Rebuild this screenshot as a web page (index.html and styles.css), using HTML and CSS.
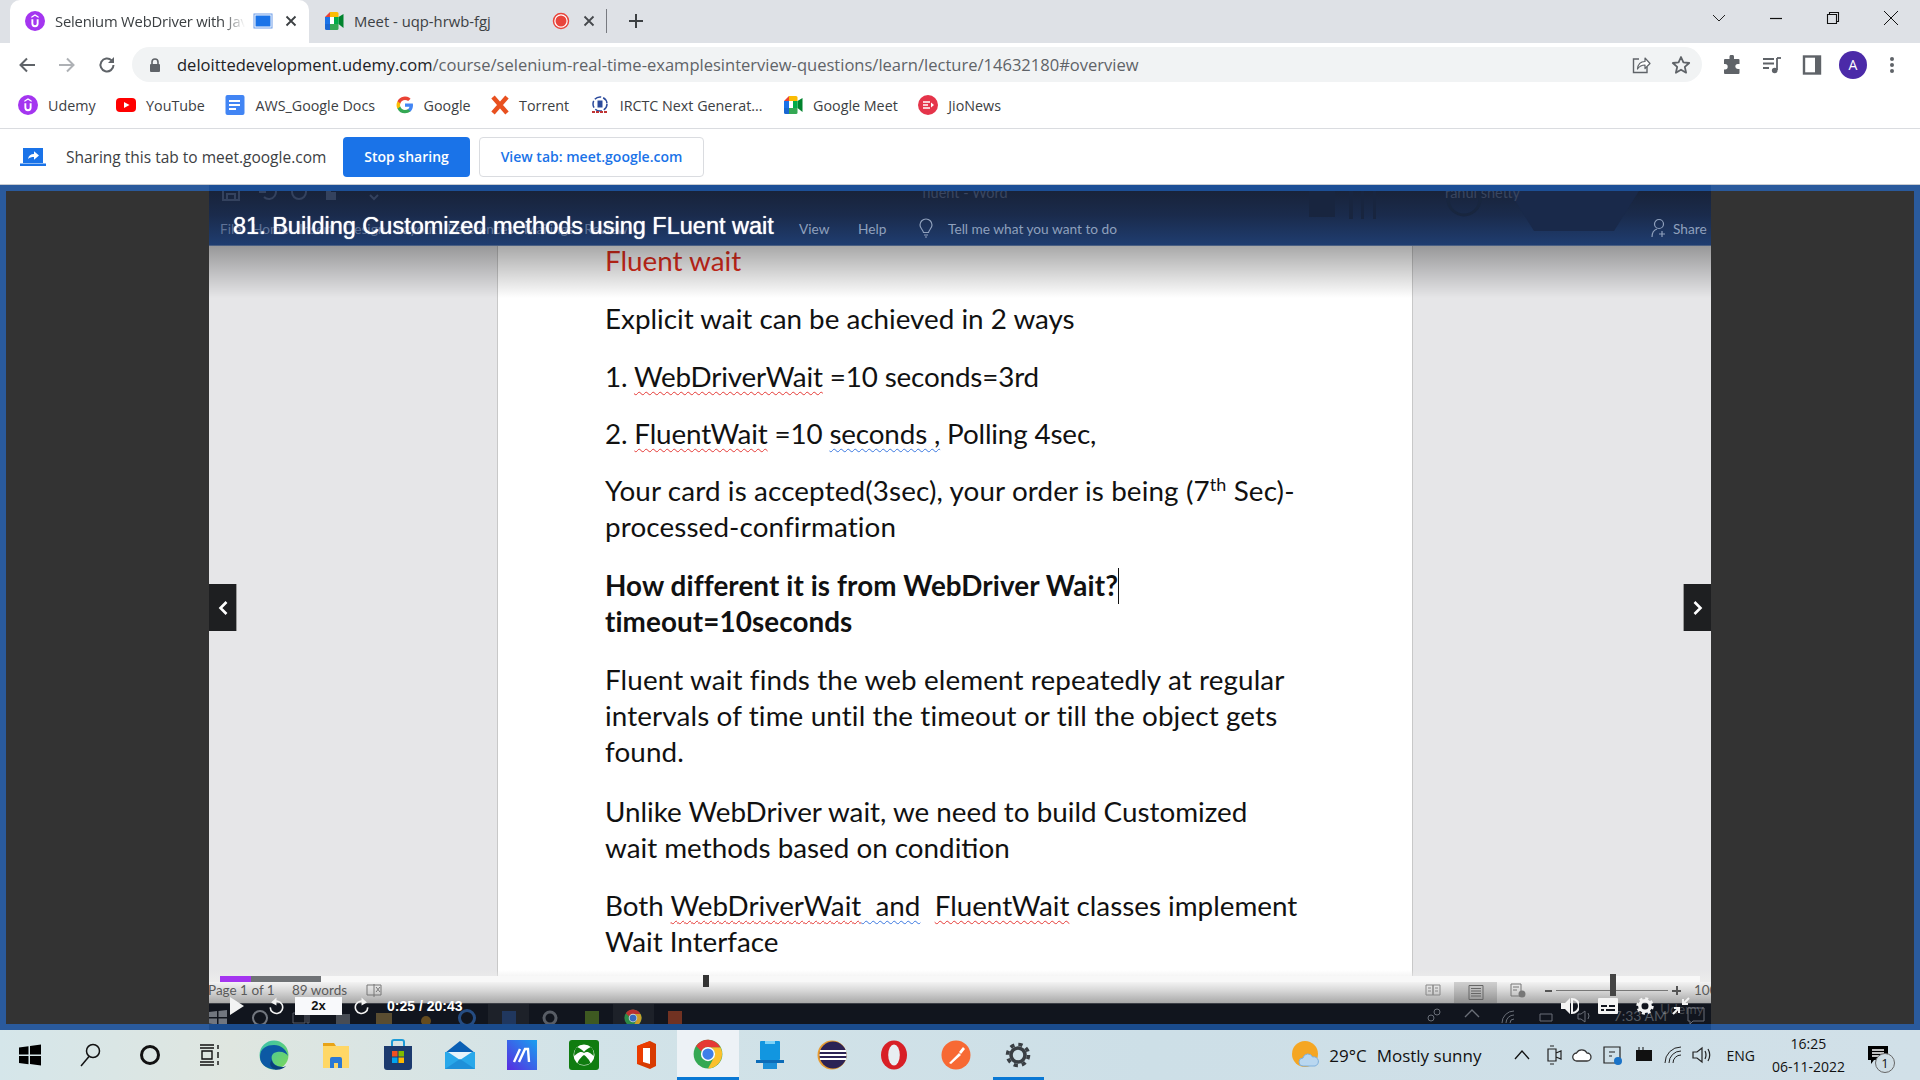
FILE: index.html
```html
<!DOCTYPE html>
<html>
<head>
    <meta charset="UTF-8">
    <title>Selenium WebDriver with Java</title>
    <link rel="stylesheet" href="styles.css">
</head>
<body>
    <!-- shared icons -->
    <svg class="defs" width="0" height="0">
        <symbol id="udemy" viewBox="0 0 20 20">
            <circle cx="10" cy="10" r="10" fill="#a435f0"/>
            <path d="M6.4 8.2v4.4a3.6 3.6 0 0 0 7.2 0V8.200h-1.900v4.300a1.700 1.700 0 0 1-3.400 0V8.200z" fill="#fff"/>
            <path d="M10 3.200l3.600 2.300v1.400L10 4.700 6.400 6.900V5.500z" fill="#fff"/>
        </symbol>
        <symbol id="meet" viewBox="0 0 20 20">
            <path d="M1 6l5-5v5z" fill="#ea4335"/>
            <path d="M6 1h7a1.500 1.500 0 0 1 1.500 1.500V6H6z" fill="#fbbc04"/>
            <path d="M1 6h5v7H1z" fill="#1a73e8"/>
            <path d="M1 13h5v6H2.500A1.500 1.500 0 0 1 1 17.500z" fill="#1967d2"/>
            <path d="M6 13h8.500v4.500A1.500 1.500 0 0 1 13 19H6z" fill="#34a853"/>
            <path d="M14.500 6v7L19.500 17V3z" fill="#00832d"/>
            <path d="M10 6h4.500v7H10z" fill="#00ac47"/>
            <path d="M6 6h4v7H6z" fill="#fff"/>
        </symbol>
        <symbol id="chrome" viewBox="0 0 24 24">
            <circle cx="12" cy="12" r="11.500" fill="#34a853"/>
            <path d="M21.900 6.500A11.500 11.500 0 0 1 12 23.500l4.800-8.800A5.500 5.500 0 0 0 12 6.500z" fill="#fbc02d"/>
            <path d="M2.500 5.500A11.500 11.500 0 0 1 21.900 6.500H12A5.500 5.500 0 0 0 6.800 10z" fill="#e53935"/>
            <circle cx="12" cy="12" r="5.700" fill="#fff"/>
            <circle cx="12" cy="12" r="4.500" fill="#3f7fe8"/>
        </symbol>
    </svg>

    <!-- tab strip -->
    <header class="tabstrip">
        <div class="tab tab-active">
            <svg class="tab-fav" width="20" height="20"><use href="#udemy"/></svg>
            <span class="tab-title tab-fade">Selenium WebDriver with Java</span>
            <svg class="tab-badge" width="20" height="20" viewBox="0 0 20 20"><rect x="1" y="3" width="18" height="14" fill="#fff" stroke="#6c9ce8"/><rect x="2.500" y="4.500" width="15" height="11" fill="#1a73e8"/></svg>
            <svg class="tab-x" width="12" height="12" viewBox="0 0 12 12"><path d="M1.500 1.500l9 9M10.500 1.500l-9 9" stroke="#3c4043" stroke-width="1.800"/></svg>
        </div>
        <div class="tab tab-bg">
            <svg class="tab-fav" width="20" height="20"><use href="#meet"/></svg>
            <span class="tab-title">Meet - uqp-hrwb-fgj</span>
            <svg class="tab-badge" width="18" height="18" viewBox="0 0 18 18"><circle cx="9" cy="9" r="7.500" fill="#fff" stroke="#e8453c" stroke-width="1.500"/><circle cx="9" cy="9" r="5.500" fill="#e8453c"/></svg>
            <svg class="tab-x" width="12" height="12" viewBox="0 0 12 12"><path d="M1.500 1.500l9 9M10.500 1.500l-9 9" stroke="#45484c" stroke-width="1.800"/></svg>
        </div>
        <span class="tab-sep"></span>
        <svg class="tab-new" width="16" height="16" viewBox="0 0 16 16"><path d="M8 1v14M1 8h14" stroke="#3c4043" stroke-width="2"/></svg>
        <div class="win-controls">
            <svg width="14" height="14" viewBox="0 0 14 14" class="win-chevron"><path d="M1 4l6 6 6-6" fill="none" stroke="#222" stroke-width="1"/></svg>
            <svg width="14" height="14" viewBox="0 0 14 14" class="win-btn"><path d="M1 7.500h12" stroke="#111" stroke-width="1.200"/></svg>
            <svg width="14" height="14" viewBox="0 0 14 14" class="win-btn"><path d="M1.500 3.500h9v9h-9zM3.500 3.500v-2h9v9h-2" fill="none" stroke="#111" stroke-width="1.100"/></svg>
            <svg width="16" height="16" viewBox="0 0 16 16" class="win-btn"><path d="M1 1l14 14M15 1L1 15" stroke="#111" stroke-width="1"/></svg>
        </div>
    </header>

    <!-- address bar -->
    <nav class="toolbar">
        <svg class="tb-icon" width="18" height="18" viewBox="0 0 18 18"><path d="M17 9H3M9 2.500L2.500 9 9 15.500" fill="none" stroke="#5f6368" stroke-width="2"/></svg>
        <svg class="tb-icon" width="18" height="18" viewBox="0 0 18 18"><path d="M1 9h14M9 2.500L15.500 9 9 15.500" fill="none" stroke="#aeb1b5" stroke-width="2"/></svg>
        <svg class="tb-icon" width="18" height="18" viewBox="0 0 18 18"><path d="M15.500 9A6.500 6.500 0 1 1 13.600 4.400" fill="none" stroke="#5f6368" stroke-width="2"/><path d="M16 1v6h-6z" fill="#5f6368"/></svg>
        <div class="omnibox">
            <svg class="lock" width="12" height="14" viewBox="0 0 12 14"><path d="M3 6V4a3 3 0 0 1 6 0v2" fill="none" stroke="#5f6368" stroke-width="1.600"/><rect x="1" y="6" width="10" height="8" rx="1" fill="#5f6368"/></svg>
            <span class="url"><span class="url-host">deloittedevelopment.udemy.com</span>/course/selenium-real-time-examplesinterview-questions/learn/lecture/14632180#overview</span>
            <svg class="omni-share" width="20" height="20" viewBox="0 0 20 20"><path d="M8 4H2.500v13.500H16V12" fill="none" stroke="#5f6368" stroke-width="1.400"/><path d="M6.500 14c.5-5 3.500-7.500 7.500-7.500V3l5 5.500-5 5V10c-3 0-5.500 1-7.500 4z" fill="#fff" stroke="#5f6368" stroke-width="1.200" stroke-linejoin="round"/></svg>
            <svg class="omni-star" width="20" height="20" viewBox="0 0 20 20"><path d="M10 2l2.400 5.400 5.800.6-4.400 3.900 1.300 5.800L10 14.700l-5.100 3 1.300-5.800L1.800 8l5.800-.6z" fill="none" stroke="#5f6368" stroke-width="1.800" stroke-linejoin="round"/></svg>
        </div>
        <div class="tb-right">
            <svg width="20" height="20" viewBox="0 0 20 20"><path d="M7.500 1.500a2.300 2.300 0 0 1 4.500 0V4h4.500a1 1 0 0 1 1 1v4h-1.700a2.500 2.500 0 0 0 0 5h1.700v4a1 1 0 0 1-1 1H3a1 1 0 0 1-1-1v-3.500h1a2.700 2.700 0 0 0 0-5.400H2V5a1 1 0 0 1 1-1h4.500z" fill="#5f6368"/></svg>
            <svg width="20" height="20" viewBox="0 0 20 20"><path d="M1 4h11M1 8.500h11M1 13h6" stroke="#5f6368" stroke-width="1.800"/><path d="M15 3v12" stroke="#5f6368" stroke-width="1.800"/><path d="M15 3h4" stroke="#5f6368" stroke-width="1.800"/><circle cx="12.700" cy="15.500" r="2.800" fill="#5f6368"/></svg>
            <svg width="20" height="20" viewBox="0 0 20 20"><rect x="2" y="1.500" width="16" height="17" fill="#fff" stroke="#5f6368" stroke-width="2.400"/><rect x="13" y="1.500" width="5" height="17" fill="#5f6368"/></svg>
            <span class="avatar">A</span>
            <svg class="dots" width="6" height="18" viewBox="0 0 6 18"><circle cx="3" cy="3" r="2" fill="#5f6368"/><circle cx="3" cy="9" r="2" fill="#5f6368"/><circle cx="3" cy="15" r="2" fill="#5f6368"/></svg>
        </div>
    </nav>

    <!-- bookmarks -->
    <div class="bookmarks">
        <a class="bm"><svg width="20" height="20"><use href="#udemy"/></svg>Udemy</a>
        <a class="bm"><svg width="20" height="20" viewBox="0 0 20 20"><rect y="3" width="20" height="14" rx="4" fill="#f00"/><path d="M8 7l5.500 3L8 13z" fill="#fff"/></svg>YouTube</a>
        <a class="bm"><svg width="20" height="20" viewBox="0 0 20 20"><rect width="19" height="20" rx="2" x="0.500" fill="#4285f4"/><path d="M4 6h11M4 10h11M4 14h7" stroke="#fff" stroke-width="2"/></svg>AWS_Google Docs</a>
        <a class="bm"><svg width="18" height="18" viewBox="0 0 18 18"><path d="M17 9.200c0-.6-.1-1.200-.2-1.700H9v3.300h4.500a3.900 3.900 0 0 1-1.700 2.500v2.100h2.700c1.600-1.500 2.500-3.600 2.500-6.200z" fill="#4285f4"/><path d="M9 17.300c2.200 0 4.100-.7 5.500-2l-2.700-2.100c-.7.500-1.700.8-2.800.8-2.200 0-4-1.400-4.700-3.400H1.500v2.200A8.300 8.300 0 0 0 9 17.300z" fill="#34a853"/><path d="M4.300 10.600a5 5 0 0 1 0-3.200V5.200H1.500a8.300 8.300 0 0 0 0 7.600z" fill="#fbbc05"/><path d="M9 3.900c1.200 0 2.300.4 3.200 1.200l2.400-2.400A8.300 8.300 0 0 0 1.500 5.200l2.800 2.200C5 5.300 6.800 3.900 9 3.900z" fill="#ea4335"/></svg>Google</a>
        <a class="bm"><svg width="18" height="20" viewBox="0 0 18 20"><path d="M2 2l14 16M16 2L2 18" stroke="#e8501f" stroke-width="4.500"/></svg>Torrent</a>
        <a class="bm"><svg width="20" height="20" viewBox="0 0 20 20"><circle cx="10" cy="9" r="7" fill="none" stroke="#2b4a9c" stroke-width="1.500" stroke-dasharray="7 2"/><path d="M7.500 5.500h5v7h-5z" fill="#2b4a9c"/><path d="M2 17h16" stroke="#c03434" stroke-width="2" stroke-dasharray="3 1"/></svg>IRCTC Next Generat...</a>
        <a class="bm"><svg width="20" height="20"><use href="#meet"/></svg>Google Meet</a>
        <a class="bm"><svg width="20" height="20" viewBox="0 0 20 20"><circle cx="10" cy="10" r="10" fill="#e5344a"/><path d="M5 7h7M5 10h5M5 13h7" stroke="#fff" stroke-width="1.600"/><path d="M13 7.500l3 2.500-3 2.500z" fill="#fff"/></svg>JioNews</a>
    </div>

    <!-- tab sharing infobar -->
    <div class="infobar">
        <svg class="share-icon" width="26" height="20" viewBox="0 0 26 20"><path d="M3 1h20v15H3z" fill="#1a73e8"/><path d="M0 16.500h26V19H0z" fill="#1a73e8"/><path d="M8 12c.6-3.400 2.800-5 6-5V4.200l5 4.300-5 4.200V10c-2.500 0-4.400.5-6 2z" fill="#fff"/></svg>
        <span class="share-text">Sharing this tab to meet.google.com</span>
        <button class="btn btn-stop">Stop sharing</button>
        <button class="btn btn-view">View tab: meet.google.com</button>
    </div>

    <!-- shared screen with the course player -->
    <main class="screen">
        <div class="screen-inner">
            <section class="video">
                <div class="gutter gutter-left"></div>
                <article class="page">
                    <p class="red">Fluent wait</p>
                    <p>Explicit wait can be achieved in 2 ways</p>
                    <p class="tight">1. <span class="sp-red">WebDriverWait</span> =10 seconds=3rd</p>
                    <p class="tight">2. <span class="sp-red">FluentWait</span> =10 <span class="sp-blue">seconds ,</span> Polling 4sec,</p>
                    <p class="wide">Your card is accepted(3sec), your order is being (7<sup>th</sup> Sec)-<br>processed-confirmation</p>
                    <p class="bold">How different it is from WebDriver Wait?<span class="caret"></span><br>timeout=10seconds</p>
                    <p class="wide">Fluent wait finds the web element repeatedly at regular<br>intervals of time until the timeout or till the object gets<br>found.</p>
                    <p>Unlike WebDriver wait, we need to build Customized<br>wait methods based on condition</p>
                    <p>Both <span class="sp-red">WebDriverWait</span><span class="sp-blue">&nbsp; and</span>&nbsp; <span class="sp-red">FluentWait</span> classes implement<br>Wait Interface</p>
                </article>
                <div class="gutter"></div>

                <!-- course title over the recorded Word ribbon -->
                <div class="ribbon">
                    <svg class="ghost-art" width="420" height="42" viewBox="0 0 420 42"><path d="M10 0h26v26H10zM50 0h4v28h-4zM62 0h3v28h-3zM74 0h3v28h-3z" fill="#18253f"/><circle cx="165" cy="8" r="16" fill="none" stroke="#18263f" stroke-width="3"/><path d="M210 0h130l-25 40h-80z" fill="#19294a"/></svg>
                    <svg class="ghost-qat" width="170" height="18" viewBox="0 0 170 18"><path d="M1 1h16v16H1zM5 1v6h8V1M5 17v-6h8v6" fill="none" stroke="#34425e" stroke-width="2"/><path d="M40 8a7 7 0 1 1 2 6M38 3v6h6" fill="none" stroke="#34425e" stroke-width="2"/><circle cx="77" cy="9" r="7" fill="none" stroke="#34425e" stroke-width="2"/><path d="M104 1h5v8h5v8h-10z" fill="#34425e"/><path d="M148 12l4 4 4-4" fill="none" stroke="#34425e" stroke-width="2"/></svg>
                    <div class="ribbon-title">
                        <span class="ghost-doc">fluent - Word</span>
                        <span class="ghost-user">rahul shetty</span>
                    </div>
                    <div class="ribbon-tabs">
                        <span class="ghost-tabs">File &nbsp; Home &nbsp; Insert &nbsp; Design &nbsp; Layout &nbsp; References &nbsp; Mailings &nbsp; Review</span>
                        <span class="rb-view">View</span>
                        <span class="rb-help">Help</span>
                        <svg class="rb-bulb" width="14" height="20" viewBox="0 0 14 20"><path d="M4.500 14.500C4 11.500 1 10.500 1 7a6 6 0 0 1 12 0c0 3.500-3 4.500-3.500 7.500zM5 17h4M6 19h2" fill="none" stroke="#8fa0bc" stroke-width="1.200"/></svg>
                        <span class="rb-tell">Tell me what you want to do</span>
                        <svg class="rb-person" width="16" height="20" viewBox="0 0 16 20"><circle cx="8" cy="6" r="4.500" fill="none" stroke="#8fa0bc" stroke-width="1.200"/><path d="M1 19c0-4 2-7 5-8M11 13v6M8 16h6" fill="none" stroke="#8fa0bc" stroke-width="1.200"/></svg>
                        <span class="rb-share">Share</span>
                    </div>
                    <h1 class="lecture-title">81. Building Customized methods using FLuent wait</h1>
                </div>
                <div class="ribbon-shadow"></div>

                <button class="nav-arrow nav-prev"><svg width="12" height="16" viewBox="0 0 12 16"><path d="M9.500 2L3.500 8l6 6" fill="none" stroke="#fff" stroke-width="2.600"/></svg></button>
                <button class="nav-arrow nav-next"><svg width="12" height="16" viewBox="0 0 12 16"><path d="M2.500 2l6 6-6 6" fill="none" stroke="#fff" stroke-width="2.600"/></svg></button>

                <!-- Word status bar, recorded taskbar and the player controls on top -->
                <div class="word-bottom">
                    <div class="progress">
                        <span class="progress-done"></span><span class="progress-buf"></span>
                        <span class="ruler-mark"></span>
                        <span class="zoom-thumb"></span>
                    </div>
                    <div class="statusbar">
                        <span class="st-page">Page 1 of 1</span>
                        <span class="st-words">89 words</span>
                        <svg class="st-book" width="16" height="14" viewBox="0 0 16 14"><path d="M8 2H1v10h7M8 1v13M8 2h7v10H8M10 4l4 5M14 4l-4 5" fill="none" stroke="#777" stroke-width="1"/></svg>
                        <svg class="st-read" width="16" height="14" viewBox="0 0 16 14"><path d="M8 2H1v10h7zM8 2h7v10H8zM3 5h3M3 8h3M10 5h3M10 8h3" fill="none" stroke="#888" stroke-width="1"/></svg>
                        <span class="st-active"><svg width="16" height="15" viewBox="0 0 16 15"><path d="M1 .5h14v14H1zM3 3.500h10M3 6h10M3 8.500h10M3 11h10" fill="none" stroke="#666" stroke-width="1"/></svg></span>
                        <svg class="st-web" width="16" height="15" viewBox="0 0 16 15"><path d="M1 1h10v12H1zM3 4h6M3 7h4" fill="none" stroke="#777"/><circle cx="12" cy="11" r="3.500" fill="#777"/></svg>
                        <span class="st-minus"></span>
                        <span class="st-track"></span>
                        <span class="st-plus"></span>
                        <span class="st-pct">100%</span>
                    </div>
                    <div class="recorded-bar">
                        <div class="ghost-left">
                            <svg width="18" height="18" viewBox="0 0 18 18"><path d="M0 3l8-1v6H0zM9.500 2L18 1v7H9.500zM0 9.500h8v6l-8-1zM9.500 9.500H18V17l-8.500-1z" fill="#8a8f98"/></svg>
                            <svg width="18" height="18" viewBox="0 0 18 18"><circle cx="9" cy="9" r="7" fill="none" stroke="#8a8f98" stroke-width="2"/></svg>
                            <svg width="18" height="18" viewBox="0 0 18 18"><path d="M1 4h12v10H1zM15 4h2v10h-2z" fill="none" stroke="#6a6f78"/></svg>
                            <svg width="18" height="18" viewBox="0 0 18 18"><path d="M2 5h14v12H2z" fill="#555a62"/></svg>
                            <svg width="18" height="18" viewBox="0 0 18 18"><path d="M1 4h16v13H1z" fill="#6d5c36"/></svg>
                            <svg width="18" height="18" viewBox="0 0 18 18"><circle cx="9" cy="12" r="5" fill="#7a5a20"/></svg>
                            <svg width="18" height="18" viewBox="0 0 18 18"><circle cx="9" cy="9" r="7.500" fill="none" stroke="#2a5a9c" stroke-width="3"/></svg>
                            <span class="ghost-active"><svg width="18" height="18" viewBox="0 0 18 18"><path d="M2 2h14v14H2z" fill="#24406e"/></svg></span>
                            <svg width="18" height="18" viewBox="0 0 18 18"><circle cx="9" cy="9" r="6" fill="none" stroke="#6a6f78" stroke-width="3"/></svg>
                            <svg width="18" height="18" viewBox="0 0 18 18"><path d="M2 2h14v14H2z" fill="#4a6a22"/></svg>
                            <span class="ghost-active"><svg width="18" height="18"><use href="#chrome"/></svg></span>
                            <svg width="18" height="18" viewBox="0 0 18 18"><path d="M2 2h14v14H2z" fill="#8a3a24"/></svg>
                        </div>
                        <div class="ghost-right">
                            <svg width="18" height="18" viewBox="0 0 18 18"><circle cx="11" cy="5" r="3" fill="none" stroke="#6a6f78"/><circle cx="5" cy="11" r="3" fill="none" stroke="#6a6f78"/></svg>
                            <svg width="16" height="12" viewBox="0 0 16 12"><path d="M1 10l7-7 7 7" fill="none" stroke="#6a6f78" stroke-width="1.400"/></svg>
                            <svg width="18" height="18" viewBox="0 0 18 18"><path d="M2 16A12 12 0 0 1 14 4M6 16a8 8 0 0 1 8-8M10 16a4 4 0 0 1 4-4" fill="none" stroke="#6a6f78"/></svg>
                            <svg width="18" height="18" viewBox="0 0 18 18"><path d="M2 7h12v7H2z" fill="none" stroke="#6a6f78"/></svg>
                            <svg width="18" height="18" viewBox="0 0 18 18"><path d="M2 7h3l4-3v11l-4-3H2zM12 6q2 3 0 6" fill="none" stroke="#6a6f78"/></svg>
                            <span class="ghost-clock">7:33 AM</span>
                            <svg width="18" height="18" viewBox="0 0 18 18"><path d="M1 1h16v13H6l-3 3v-3H1z" fill="none" stroke="#6a6f78"/></svg>
                        </div>
                    </div>
                    <div class="player">
                        <svg class="pl-play" width="16" height="18" viewBox="0 0 16 18"><path d="M1 0l14 9-14 9z" fill="#f3f3f3"/></svg>
                        <svg class="pl-back" width="16" height="19" viewBox="0 0 18 20"><path d="M5 5.500A7 7 0 1 1 2.500 11" fill="none" stroke="#f3f3f3" stroke-width="1.800"/><path d="M9.500 0v9L3.500 5.500z" fill="#f3f3f3"/></svg>
                        <span class="pl-speed">2x</span>
                        <svg class="pl-fwd" width="16" height="19" viewBox="0 0 18 20"><path d="M13 5.500A7 7 0 1 0 15.500 11" fill="none" stroke="#f3f3f3" stroke-width="1.800"/><path d="M8.500 0v9l6-3.500z" fill="#f3f3f3"/></svg>
                        <span class="pl-time">0:25 / 20:43</span>
                        <span class="pl-mark">Udemy</span>
                        <svg class="pl-vol" width="18" height="18" viewBox="0 0 18 18"><path d="M0 6h4l5-5v16l-5-5H0z" fill="#f3f3f3"/><path d="M11 2a7 7 0 0 1 0 14z" fill="none" stroke="#f3f3f3" stroke-width="2"/></svg>
                        <svg class="pl-cc" width="20" height="16" viewBox="0 0 20 16"><rect width="20" height="16" rx="1" fill="#f3f3f3"/><path d="M3 8h6M11 8h6M3 12h3M8 12h9" stroke="#11151e" stroke-width="2"/></svg>
                        <svg class="pl-gear" width="18" height="18" viewBox="0 0 18 18"><circle cx="9" cy="9" r="5.200" fill="none" stroke="#f3f3f3" stroke-width="3.400"/><circle cx="9" cy="9" r="7.400" fill="none" stroke="#f3f3f3" stroke-width="2.600" stroke-dasharray="3 2.810"/></svg>
                        <svg class="pl-full" width="18" height="18" viewBox="0 0 18 18"><path d="M17 1l-6 6M11 2v5h5M1 17l6-6M2 11h5v5" fill="none" stroke="#f3f3f3" stroke-width="2"/></svg>
                    </div>
                </div>
            </section>
        </div>
    </main>

    <!-- windows taskbar -->
    <footer class="taskbar">
        <div class="tb-apps">
            <span class="cell"><svg width="22" height="22" viewBox="0 0 22 22"><path d="M0 3.500l9.500-1.300V10.500H0zM11 2l11-1.500v10H11zM0 12h9.500v8.300L0 19zM11 12h11v9.500L11 20z" fill="#000"/></svg></span>
            <span class="cell"><svg width="22" height="24" viewBox="0 0 22 24"><circle cx="14" cy="8" r="6.500" fill="none" stroke="#111" stroke-width="1.500"/><path d="M10 13.500L2 23" stroke="#111" stroke-width="1.500"/></svg></span>
            <span class="cell"><svg width="22" height="22" viewBox="0 0 22 22"><circle cx="11" cy="11" r="8.500" fill="none" stroke="#111" stroke-width="3"/></svg></span>
            <span class="cell"><svg width="22" height="22" viewBox="0 0 22 22"><path d="M1 1h14M1 21h14M1 4h14M1 18h14M3 7h10v8H3zM19 1v4M19 8v6M19 17v4" fill="none" stroke="#111" stroke-width="1.400"/></svg></span>
            <span class="cell app"><svg width="30" height="30" viewBox="0 0 30 30"><defs><linearGradient id="edgeA" x1="0" y1="0" x2="1" y2="1"><stop offset="0" stop-color="#35c1b1"/><stop offset="1" stop-color="#7ed957"/></linearGradient></defs><circle cx="15" cy="15" r="14.500" fill="url(#edgeA)"/><path d="M1 17C1 8 8 5 15 5c7 0 12 4 14 11-2-3-6-5-11-4-5 1-6 4-5 8 1 4 5 7 11 7-3 2-6 3-9 2.500C7 28.500 1 24 1 17z" fill="#0c59a4"/><path d="M13 20c0 4 4 7 10 7 2 0 3-.5 4-1-3 3-7 4-10 3.500C12 28.500 9 24 13 20z" fill="#0a3f7a"/></svg></span>
            <span class="cell app"><svg width="28" height="30" viewBox="0 0 28 30"><path d="M1 3h11l2 3H1z" fill="#e8a317"/><rect x="1" y="6" width="26" height="22" fill="#ffd766"/><path d="M8 28v-9a2 2 0 0 1 2-2h8a2 2 0 0 1 2 2v9h-4v-5h-4v5z" fill="#2b78d4"/></svg></span>
            <span class="cell app"><svg width="30" height="32" viewBox="0 0 30 32"><path d="M9 7V3a2 2 0 0 1 2-2h8a2 2 0 0 1 2 2v4" fill="none" stroke="#1e9bd7" stroke-width="2"/><path d="M1 7h28v21a3 3 0 0 1-3 3H4a3 3 0 0 1-3-3z" fill="#1c3a6e"/><rect x="9" y="12" width="5.500" height="5.500" fill="#f25022"/><rect x="15.500" y="12" width="5.500" height="5.500" fill="#7fba00"/><rect x="9" y="18.500" width="5.500" height="5.500" fill="#00a4ef"/><rect x="15.500" y="18.500" width="5.500" height="5.500" fill="#ffb900"/></svg></span>
            <span class="cell app"><svg width="30" height="30" viewBox="0 0 30 30"><path d="M15 1L0 13h30z" fill="#0a5fb4"/><rect y="12" width="30" height="17" fill="#29a8ea"/><path d="M3 12h24L15 20z" fill="#e8f4fb"/><path d="M0 29l15-10 15 10z" fill="#1e90d9"/></svg></span>
            <span class="cell app"><svg width="30" height="30" viewBox="0 0 30 30"><defs><linearGradient id="mvA" x1="0" y1="1" x2="1" y2="0"><stop offset="0" stop-color="#5a2be0"/><stop offset="1" stop-color="#18a0f0"/></linearGradient></defs><rect width="30" height="30" fill="url(#mvA)"/><path d="M7 22L13 9M12 22L18 9h3l1 13" fill="none" stroke="#fff" stroke-width="2.400"/></svg></span>
            <span class="cell app"><svg width="30" height="30" viewBox="0 0 30 30"><rect width="30" height="30" rx="3" fill="#107c10"/><circle cx="15" cy="15" r="10.500" fill="#fff"/><path d="M8 7c3 1 5.500 3 7 5 1.500-2 4-4 7-5 3 3 3 7 2.500 9-1.500-2-6-6-9.500-3-3.500-3-8 1-9.500 3C5 14 5 10 8 7zM15 15c3 2 6 6 6.500 8-3 2.500-10 2.500-13 0C9 21 12 17 15 15z" fill="#107c10"/></svg></span>
            <span class="cell app"><svg width="24" height="30" viewBox="0 0 24 30"><path d="M16 1L3 6v18l13 5 6-3V4z" fill="#d83b01"/><path d="M16 1L3 6v18l6-2V8l7-2z" fill="#eb3c00"/><path d="M9 8h7v16l-7-2z" fill="#fff"/></svg></span>
            <span class="cell app cell-active"><svg width="30" height="30"><use href="#chrome"/></svg></span>
            <span class="cell app"><svg width="30" height="30" viewBox="0 0 30 30"><rect x="5" y="1" width="20" height="19" rx="1" fill="#1296e0"/><path d="M10 1h10v3H10z" fill="#7ed3f7"/><path d="M1 20h28v3H1z" fill="#0b6cb8"/><path d="M8 23h14v6H8z" fill="#1b8fd8"/></svg></span>
            <span class="cell app"><svg width="30" height="30" viewBox="0 0 30 30"><circle cx="15" cy="15" r="14.500" fill="#e79a2f"/><circle cx="16" cy="15" r="13.500" fill="#2c2255"/><path d="M3 11h26M2.500 15h27M3 19h26" stroke="#fff" stroke-width="2"/></svg></span>
            <span class="cell app"><svg width="30" height="30" viewBox="0 0 30 30"><ellipse cx="15" cy="15" rx="13" ry="14.500" fill="#d81f26"/><ellipse cx="15" cy="15" rx="5.800" ry="10.500" fill="#e8eef2"/></svg></span>
            <span class="cell app"><svg width="30" height="30" viewBox="0 0 30 30"><circle cx="15" cy="15" r="14.500" fill="#f76934"/><path d="M8 23l10-10 2 2L10 24zM18 12l4-5 2 2-4 5z" fill="#fff"/></svg></span>
            <span class="cell app cell-open"><svg width="26" height="26" viewBox="0 0 26 26"><circle cx="13" cy="13" r="7" fill="none" stroke="#3a3f44" stroke-width="3.600"/><circle cx="13" cy="13" r="10.500" fill="none" stroke="#3a3f44" stroke-width="3.600" stroke-dasharray="4.250 4"/></svg></span>
        </div>
        <div class="tb-tray">
            <svg class="weather" width="28" height="28" viewBox="0 0 28 28"><circle cx="13" cy="13" r="13" fill="#f5a623"/><path d="M11 25a4 4 0 0 1 0-8 5 5 0 0 1 9.500-1 4.500 4.500 0 0 1 2.500 9z" fill="#b9d7f0" stroke="#7fb0dd"/></svg>
            <span class="temp">29°C</span>
            <span class="sky">Mostly sunny</span>
            <svg class="tr-caret" width="16" height="10" viewBox="0 0 16 10"><path d="M1 9l7-8 7 8" fill="none" stroke="#111" stroke-width="1.300"/></svg>
            <svg class="tr-ic" width="16" height="20" viewBox="0 0 16 20"><path d="M2 4h8v12H2zM10 8l5-2v8l-5-2M4 1h4M4 19h4" fill="none" stroke="#222" stroke-width="1.200"/></svg>
            <svg class="tr-ic" width="20" height="16" viewBox="0 0 20 16"><path d="M5 14a4 4 0 0 1-.5-8A6 6 0 0 1 15 6a4 4 0 0 1 0 8z" fill="#fff" stroke="#333" stroke-width="1.300"/></svg>
            <svg class="tr-ic" width="20" height="20" viewBox="0 0 20 20"><path d="M1 2h16v16H1zM6 7h6M6 11h3" fill="none" stroke="#222" stroke-width="1.200"/><circle cx="15" cy="16" r="4" fill="#1a73c8"/></svg>
            <svg class="tr-ic" width="20" height="16" viewBox="0 0 20 16"><rect x="3" y="3" width="16" height="11" fill="#111"/><path d="M6 0v3M10 0v3" stroke="#111"/></svg>
            <svg class="tr-ic" width="18" height="18" viewBox="0 0 18 18"><path d="M1 17A16 16 0 0 1 17 1M5 17A12 12 0 0 1 17 5M9 17a8 8 0 0 1 8-8" fill="none" stroke="#222"/></svg>
            <svg class="tr-ic" width="20" height="18" viewBox="0 0 20 18"><path d="M1 6h4l5-4v14l-5-4H1zM13 5q2 4 0 8M16 3q3.500 6 0 12" fill="none" stroke="#222" stroke-width="1.200"/></svg>
            <span class="lang">ENG</span>
            <span class="clock"><span>16:25</span><span>06-11-2022</span></span>
            <span class="notif">
                <svg width="20" height="18" viewBox="0 0 20 18"><path d="M0 0h20v14H6l-3 4v-4H0z" fill="#000"/><path d="M4 4h12M4 7h12M4 10h8" stroke="#fff" stroke-width="1.300"/></svg>
                <span class="notif-count">1</span>
            </span>
        </div>
    </footer>
</body>
</html>
```

FILE: styles.css
```css
* {
    box-sizing: border-box;
}
html, body {
    margin: 0;
    height: 100%;
}
body {
    width: 1920px;
    height: 1080px;
    overflow: hidden;
    display: flex;
    flex-direction: column;
    font-family: "Open Sans", sans-serif;
    background-color: #ffffff;
}
.defs {
    position: absolute;
}

/* tab strip */
.tabstrip {
    height: 43px;
    display: flex;
    align-items: center;
    background-color: #dee1e6;
    padding-left: 10px;
    flex: none;
}
.tab {
    height: 43px;
    display: flex;
    align-items: center;
    font-size: 14.800px;
    color: #3c4043;
    padding-bottom: 2px;
}
.tab-active {
    width: 299px;
    background-color: #ffffff;
    border-radius: 10px 10px 0 0;
    padding-left: 15px;
}
.tab-bg {
    width: 289px;
    padding-left: 15px;
}
.tab-title {
    margin-left: 10px;
    white-space: nowrap;
    overflow: hidden;
}
.tab-active .tab-title {
    width: 190px;
    letter-spacing: -.2px;
}
.tab-bg .tab-title {
    width: 198px;
}
.tab-fade {
    -webkit-mask-image: linear-gradient(90deg, #000 88%, transparent);
}
.tab-badge {
    margin-left: 8px;
}
.tab-x {
    margin-left: 12px;
    flex: none;
}
.tab-bg .tab-badge {
    margin-left: 0;
}
.tab-bg .tab-x {
    margin-left: 13px;
}
.tab-sep {
    width: 1px;
    height: 24px;
    background-color: #777a80;
    margin-left: 8px;
    margin-bottom: 2px;
}
.tab-new {
    margin-left: 21px;
    margin-bottom: 2px;
}
.win-controls {
    margin-left: auto;
    display: flex;
    align-items: center;
    height: 36px;
    align-self: flex-start;
}
.win-chevron {
    margin-right: 43px;
}
.win-btn {
    margin-right: 43px;
}
.win-btn:last-child {
    margin-right: 21px;
}

/* address bar */
.toolbar {
    height: 43px;
    display: flex;
    align-items: center;
    flex: none;
    background-color: #ffffff;
    padding-left: 18px;
}
.tb-icon {
    margin-right: 22px;
}
.omnibox {
    width: 1570px;
    height: 35px;
    margin-left: -6px;
    border-radius: 18px;
    background-color: #f1f3f4;
    display: flex;
    align-items: center;
    padding-left: 17px;
}
.lock {
    flex: none;
}
.url {
    margin-left: 16px;
    font-size: 16.550px;
    color: #5f6368;
    white-space: nowrap;
}
.url-host {
    color: #202124;
}
.omni-share {
    margin-left: auto;
}
.omni-star {
    margin-left: 20px;
    margin-right: 11px;
}
.tb-right {
    display: flex;
    align-items: center;
    margin-left: 20px;
    gap: 20px;
}
.avatar {
    width: 28px;
    height: 28px;
    border-radius: 50%;
    background-color: #4b2aa8;
    color: #ffffff;
    font-size: 14px;
    display: flex;
    align-items: center;
    justify-content: center;
    margin-left: -3px;
    margin-right: 2px;
}

/* bookmarks */
.bookmarks {
    height: 43px;
    flex: none;
    display: flex;
    align-items: center;
    gap: 20.500px;
    padding: 0 0 4px 18px;
    background-color: #ffffff;
    border-bottom: 1px solid #dadce0;
}
.bm {
    display: flex;
    align-items: center;
    gap: 10px;
    font-size: 14.300px;
    color: #3c4043;
    white-space: nowrap;
}

/* infobar */
.infobar {
    height: 56px;
    flex: none;
    display: flex;
    align-items: center;
    padding-left: 20px;
    background-color: #ffffff;
    border-bottom: 1px solid #c9ccd1;
}
.share-text {
    margin-left: 20px;
    width: 277px;
    font-size: 15.500px;
    color: #3c4043;
    white-space: nowrap;
}
.btn {
    height: 40px;
    border-radius: 4px;
    font-family: "Open Sans", sans-serif;
    font-size: 14px;
    font-weight: 600;
    padding: 0;
}
.btn-stop {
    width: 127px;
    border: 0;
    background-color: #1a73e8;
    color: #ffffff;
}
.btn-view {
    width: 225px;
    margin-left: 9px;
    border: 1px solid #dadce0;
    background-color: #ffffff;
    color: #1a73e8;
}

/* shared screen */
.screen {
    flex: 1;
    min-height: 0;
    padding: 6px;
    background-color: #2a5a9c;
}
.screen-inner {
    height: 100%;
    display: flex;
    justify-content: center;
    background-color: #333333;
}
.video {
    position: relative;
    width: 1502px;
    height: 100%;
    display: flex;
    overflow: hidden;
    background-color: #e6e6e8;
    box-shadow: 0 6px 0 #1a4b8c, 0 -6px 0 #1c4f96;
}
.gutter {
    flex: 1;
}
.gutter-left {
    flex: none;
    width: 288px;
}
.page {
    width: 916px;
    flex: none;
    background-color: #ffffff;
    border-left: 1px solid #c8c8c8;
    border-right: 1px solid #c8c8c8;
    padding: 52px 0 0 107px;
    font-family: Lato, sans-serif;
    font-size: 27.800px;
    line-height: 36px;
    color: #111111;
    white-space: nowrap;
}
.page p {
    margin: 0 0 21.900px;
}
.page sup {
    font-size: 18px;
    line-height: 0;
}
.page .tight {
    margin-bottom: 21px;
    letter-spacing: -.15px;
}
.page .wide {
    margin-bottom: 23.500px;
    letter-spacing: .13px;
}
.red {
    color: #e32d1c;
}
.bold {
    font-weight: 700;
    letter-spacing: .1px;
}
.sp-red {
    text-decoration: underline wavy #e53935 1px;
    text-underline-offset: 4px;
}
.sp-blue {
    text-decoration: underline wavy #3a78e0 1px;
    text-underline-offset: 4px;
}
.caret {
    display: inline-block;
    width: 1px;
    height: 36px;
    background-color: #111111;
    vertical-align: top;
}

/* ribbon and title over the video */
.ribbon {
    position: absolute;
    top: 0;
    left: 0;
    right: 0;
    height: 55px;
    background: linear-gradient(180deg, #18233a 0%, #1a2b4c 45%, #1f3d70 100%);
    border-bottom: 1px solid #4a5f82;
    overflow: hidden;
}
.ghost-art {
    position: absolute;
    left: 1090px;
    top: 0;
}
.ghost-qat {
    position: absolute;
    left: 13px;
    top: -8px;
}
.ribbon-title span {
    position: absolute;
    top: -7px;
    font-family: Lato, sans-serif;
    font-size: 14.500px;
    color: #3a4660;
}
.ghost-doc {
    left: 713px;
}
.ghost-user {
    left: 1236px;
}
.ribbon-tabs span, .ribbon-tabs svg {
    position: absolute;
    top: 29px;
}
.ribbon-tabs {
    font-family: Lato, sans-serif;
    font-size: 13.700px;
    color: #8fa0bc;
}
.ribbon-tabs .ghost-tabs {
    left: 11px;
    color: #5f7296;
    white-space: nowrap;
}
.ribbon-tabs .rb-view {
    left: 590px;
}
.ribbon-tabs .rb-help {
    left: 649px;
}
.ribbon-tabs .rb-bulb {
    left: 710px;
    top: 27px;
}
.ribbon-tabs .rb-tell {
    left: 739px;
}
.ribbon-tabs .rb-person {
    left: 1442px;
    top: 27px;
}
.ribbon-tabs .rb-share {
    left: 1464px;
}
.lecture-title {
    position: absolute;
    left: 24px;
    top: 21px;
    margin: 0;
    font-family: "Liberation Sans", sans-serif;
    font-size: 23.500px;
    line-height: 28px;
    font-weight: 400;
    color: #ffffff;
    white-space: nowrap;
    text-shadow: 0 0 1px #ffffff;
}
.ribbon-shadow {
    position: absolute;
    top: 55px;
    left: 0;
    right: 0;
    height: 52px;
    background: linear-gradient(180deg, rgba(0, 0, 0, .34), rgba(0, 0, 0, 0));
}
.nav-arrow {
    position: absolute;
    top: 393px;
    width: 27px;
    height: 47px;
    border: 0;
    padding: 0;
    display: flex;
    align-items: center;
    justify-content: center;
    background-color: #1e1f21;
}
.nav-prev {
    left: 0;
    box-shadow: 1px 0 0 #9a9a9a;
}
.nav-next {
    right: 0;
    box-shadow: -1px 0 0 #9a9a9a;
}

/* bottom stack */
.word-bottom {
    position: absolute;
    left: 0;
    right: 0;
    bottom: 0;
    height: 48px;
}
.word-bottom::before {
    content: "";
    position: absolute;
    left: 0;
    right: 0;
    top: -6px;
    height: 12px;
    background: linear-gradient(180deg, rgba(235, 235, 235, 0), #ececec);
}
.progress {
    position: relative;
    z-index: 1;
    height: 6px;
    margin: 0 11px;
    display: flex;
    background-color: #f8f8f8;
}
.progress-done {
    width: 31px;
    background-color: #a435f0;
}
.progress-buf {
    width: 70px;
    background-color: #6f7275;
}
.ruler-mark {
    position: absolute;
    left: 483px;
    top: -1px;
    width: 6px;
    height: 12px;
    background-color: #333333;
}
.zoom-thumb {
    position: absolute;
    left: 1390px;
    top: -2px;
    width: 6px;
    height: 22px;
    background-color: #444444;
}
.statusbar {
    position: relative;
    height: 21px;
    background: linear-gradient(180deg, #f3f3f3 0%, #d8d8d8 40%, #a8a8a8 100%);
    font-family: Lato, sans-serif;
    font-size: 13.500px;
    color: #5a5a5a;
}
.statusbar > * {
    position: absolute;
}
.st-page {
    left: -1px;
    top: 0;
}
.st-words {
    left: 83px;
    top: 0;
}
.st-book {
    left: 157px;
    top: 1px;
}
.st-read {
    left: 1216px;
    top: 1px;
}
.st-active {
    left: 1245px;
    top: 0;
    width: 43px;
    height: 21px;
    display: flex;
    align-items: center;
    justify-content: center;
    background-color: rgba(0, 0, 0, .14);
}
.st-web {
    left: 1301px;
    top: 1px;
}
.st-minus {
    left: 1336px;
    top: 8px;
    width: 7px;
    height: 2px;
    background-color: #555555;
}
.st-track {
    left: 1347px;
    top: 8px;
    width: 112px;
    height: 1px;
    background-color: #777777;
}
.st-plus {
    left: 1463px;
    top: 4px;
    width: 9px;
    height: 9px;
    background: linear-gradient(#555555, #555555) center / 9px 2px no-repeat, linear-gradient(#555555, #555555) center / 2px 9px no-repeat;
}
.st-pct {
    left: 1485px;
    top: 0;
}
.recorded-bar {
    height: 21px;
    background-color: #11151e;
    border-top: 1px solid #3c3f46;
    display: flex;
    justify-content: space-between;
    overflow: hidden;
}
.ghost-left {
    display: flex;
    align-items: flex-start;
    gap: 23.500px;
    padding-top: 5px;
    height: 21px;
    opacity: .8;
}
.ghost-active {
    background-color: #20242c;
    padding: 5px 11.500px 0;
    margin: -5px -11.500px 0;
    height: 21px;
}
.ghost-right {
    display: flex;
    align-items: flex-start;
    gap: 20px;
    padding-top: 3px;
    padding-right: 6px;
    color: #555a62;
    font-family: Lato, sans-serif;
    font-size: 14px;
}
.player {
    position: absolute;
    left: 0;
    right: 0;
    top: 21px;
    height: 22px;
    color: #ffffff;
}
.player > * {
    position: absolute;
}
.pl-play {
    left: 20px;
    top: 0;
}
.pl-back {
    left: 59px;
    top: 0;
}
.pl-speed {
    left: 86px;
    top: 0;
    width: 47px;
    height: 18px;
    background-color: #f8f9fb;
    color: #111111;
    font-family: "Liberation Sans", sans-serif;
    font-size: 13px;
    font-weight: 700;
    line-height: 18px;
    text-align: center;
}
.pl-fwd {
    left: 145px;
    top: 0;
}
.pl-time {
    left: 178px;
    top: 1px;
    font-family: "Liberation Sans", sans-serif;
    font-size: 14px;
    font-weight: 700;
    line-height: 16px;
}
.pl-mark {
    left: 1451px;
    top: 3px;
    font-family: Lato, sans-serif;
    font-size: 14px;
    color: rgba(255, 255, 255, .22);
}
.pl-vol {
    left: 1352px;
    top: 0;
}
.pl-cc {
    left: 1389px;
    top: 1px;
}
.pl-gear {
    left: 1427px;
    top: 0;
}
.pl-full {
    left: 1463px;
    top: 0;
}

/* taskbar */
.taskbar {
    height: 50px;
    flex: none;
    display: flex;
    align-items: center;
    background: linear-gradient(90deg, #d5e6ea 0%, #dfe6e0 12%, #d2e3e8 30%, #cddfe7 60%, #d1e0e8 100%);
}
.tb-apps {
    display: flex;
    height: 100%;
}
.cell {
    width: 60px;
    height: 100%;
    display: flex;
    align-items: center;
    justify-content: center;
}
.app {
    width: 62px;
}
.cell:nth-child(5) {
    margin-left: 3px;
}
.cell-active {
    background-color: #edf2f6;
    border-bottom: 3px solid #0a78d4;
}
.cell-open {
    background: linear-gradient(#0a78d4, #0a78d4) center bottom / 51px 3px no-repeat;
}
.tb-tray {
    margin-left: auto;
    display: flex;
    align-items: center;
    height: 100%;
    padding-right: 32px;
    font-size: 17px;
    color: #111111;
}
.weather {
    margin-right: 2px;
    transform: translateX(2px);
}
.temp {
    margin-left: 9px;
}
.sky {
    margin-left: 10px;
    margin-right: 33px;
}
.tr-ic {
    margin-left: 10.500px;
}
.tr-caret {
    margin-right: 5px;
}
.lang {
    margin-left: 14px;
    font-size: 14px;
}
.clock {
    display: flex;
    flex-direction: column;
    align-items: center;
    margin-left: 17px;
    gap: 5px;
    font-size: 14px;
    line-height: 18px;
}
.notif {
    position: relative;
    margin-left: 23px;
    display: flex;
}
.notif-count {
    position: absolute;
    right: -7px;
    bottom: -9px;
    width: 20px;
    height: 20px;
    border: 1px solid #666666;
    border-radius: 50%;
    background-color: #cfdde4;
    font-size: 13px;
    line-height: 18px;
    text-align: center;
}
```
